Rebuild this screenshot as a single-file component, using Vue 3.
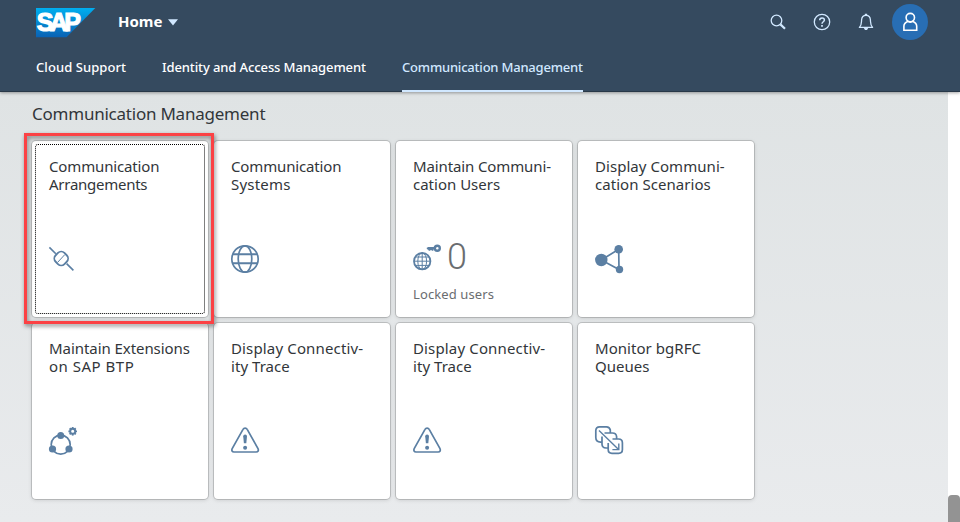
<script setup>
const tabs = [
  { label: 'Cloud Support', cls: 'tab-support' },
  { label: 'Identity and Access Management', cls: 'tab-identity' },
  { label: 'Communication Management', cls: 'tab-comm', active: true },
]

const tiles = [
  { icon: 'connect', focused: true, lines: [['Communication', -0.15], ['Arrangements', -0.26]] },
  { icon: 'globe', lines: [['Communication', -0.15], ['Systems', 0.2]] },
  { icon: 'key', value: '0', footer: 'Locked users', lines: [['Maintain Communi-', -0.12], ['cation Users', 0]] },
  { icon: 'share', lines: [['Display Communi-', 0.05], ['cation Scenarios', 0.05]] },
  { icon: 'extension', lines: [['Maintain Extensions', -0.06], ['on SAP BTP', 0.5]] },
  { icon: 'warning', lines: [['Display Connectiv-', 0.15], ['ity Trace', 0.05]] },
  { icon: 'warning', lines: [['Display Connectiv-', 0.15], ['ity Trace', 0.05]] },
  { icon: 'queue', lines: [['Monitor bgRFC', 0.04], ['Queues', 0]] },
]
const teeth = [0, 45, 90, 135, 180, 225, 270, 315]
</script>

<template>
  <div class="shell">
    <header class="header">
      <div class="bar">
        <svg class="logo" width="60" height="30" viewBox="0 0 60 30">
          <defs>
            <linearGradient id="sapBlue" x1="0" y1="0" x2="0" y2="1">
              <stop offset="0" stop-color="#00aeef" />
              <stop offset="1" stop-color="#0a62b4" />
            </linearGradient>
          </defs>
          <path d="M0 0H59.300L30.500 29.300H0Z" fill="url(#sapBlue)" />
          <text class="logo-text" x="0.800" y="23.200">SAP</text>
        </svg>
        <span class="home">Home</span>
        <svg class="caret" width="10" height="7" viewBox="0 0 10 7"><path d="M0 0.300H10L5 6.600Z" fill="#d1e8ff" /></svg>
        <div class="actions">
          <svg width="16" height="16" viewBox="0 0 16 16" class="act">
            <circle cx="6.500" cy="6.500" r="5.300" />
            <path d="M10.400 10.400L15 14.700" stroke-width="2.200" />
          </svg>
          <svg width="18" height="18" viewBox="0 0 18 18" class="act">
            <circle cx="9" cy="9" r="7.700" />
            <path d="M6.700 7.200C6.700 4.200 11.400 4.200 11.400 7C11.400 8.800 9 8.700 9 10.800" stroke-width="1.500" />
            <path d="M9 12.100V13.700" stroke-width="1.700" />
          </svg>
          <svg width="16" height="18" viewBox="0 0 16 18" class="act">
            <path d="M1.400 14.400C3.700 12.300 3.400 10 3.600 6.800C3.800 3.800 5.300 2.300 8 2.300C10.700 2.300 12.200 3.800 12.400 6.800C12.600 10 12.300 12.300 14.600 14.400Z" stroke-linejoin="round" />
            <path d="M6.800 1.400H9.200" />
            <path d="M5.800 15H10.200L9 17H7Z" fill="#d1e8ff" stroke="none" />
          </svg>
          <div class="avatar">
            <svg width="16" height="20" viewBox="0 0 16 20">
              <circle cx="8.300" cy="5.600" r="4.200" />
              <path d="M1.900 18.300V14.300C1.900 11.800 3.600 10.200 5.700 9.400Q8.300 10.800 10.900 9.400C13 10.200 14.700 11.800 14.700 14.300V18.300Z" />
            </svg>
          </div>
        </div>
      </div>
      <nav class="tabs">
        <a v-for="t in tabs" :key="t.label" class="tab" :class="[t.cls, { active: t.active }]">{{ t.label }}</a>
      </nav>
    </header>

    <div class="body">
      <main class="content">
        <h2 class="heading">Communication Management</h2>
        <div class="grid">
          <article v-for="(tile, i) in tiles" :key="i" class="tile" :class="{ focused: tile.focused }">
            <h3 class="title">
              <span v-for="l in tile.lines" :key="l[0]" class="line" :style="{ letterSpacing: l[1] + 'px' }">{{ l[0] }}</span>
            </h3>
            <div class="kpi">
              <svg class="icon" width="30" height="30" viewBox="0 0 30 30">
                <g v-if="tile.icon === 'connect'">
                  <path d="M.4 3.400L6.800 9.800M17.600 19.600L24.400 26.400" stroke-width="1.600" />
                  <rect x="6" y="8.300" width="12.400" height="12.400" rx="4.600" transform="rotate(45 12.200 14.500)" stroke-width="1.800" />
                  <path d="M8.600 18.400L15.800 10.600" stroke-width="1" />
                </g>
                <g v-else-if="tile.icon === 'globe'" stroke-width="1.700">
                  <circle cx="14" cy="15" r="13.200" />
                  <ellipse cx="14" cy="15" rx="6.800" ry="13.200" />
                  <path d="M1.600 10.200H26.400M1.600 19.200H26.400" stroke-width="2" />
                </g>
                <g v-else-if="tile.icon === 'key'">
                  <circle cx="9.200" cy="17.200" r="8.200" stroke-width="1.800" />
                  <ellipse cx="9.200" cy="17.200" rx="4.400" ry="8.300" stroke-width="1" />
                  <path d="M9.200 9V25.400M1 17.200H17.400M2.300 13H16.100M2.300 21.400H16.100" stroke-width="1" />
                  <circle cx="24.300" cy="4.300" r="2.500" stroke-width="2.400" />
                  <path d="M13.500 4L15.200 3H22V5.600H20.400V6.800H18.600V5.900H17.400V6.800H15.800L15 5.600H14.400Z" class="solid" />
                </g>
                <g v-else-if="tile.icon === 'share'">
                  <path d="M6.300 16L23.700 5.300L24 25.500Z" stroke-width="1.700" />
                  <circle class="solid" cx="6.300" cy="16" r="6.200" />
                  <circle class="solid" cx="23.700" cy="5.300" r="4.300" />
                  <circle class="solid" cx="24.500" cy="25.500" r="3.700" />
                </g>
                <g v-else-if="tile.icon === 'extension'">
                  <circle cx="11.700" cy="18.600" r="9.500" stroke-width="1.700" />
                  <circle class="solid" cx="11.700" cy="9.500" r="3.500" />
                  <circle class="solid" cx="3.500" cy="23" r="3.600" />
                  <circle class="solid" cx="20" cy="23" r="3.600" />
                  <circle cx="23.700" cy="5.300" r="2.500" stroke-width="1.900" />
                  <path v-for="a in teeth" :key="a" d="M23.700 1V2.600" stroke-width="1.800" :transform="`rotate(${a} 23.700 5.300)`" />
                </g>
                <g v-else-if="tile.icon === 'warning'">
                  <path d="M12 3.300C12.900 1.600 15.300 1.600 16.200 3.300L27 22.600C27.900 24.500 27 26 25.200 26H3C1.200 26 .3 24.500 1.200 22.600Z" stroke-width="1.700" />
                  <path class="solid" d="M12.200 10.200Q12.200 8.500 14.100 8.500Q16 8.500 16 10.200L15.300 17.200H12.900Z" />
                  <circle class="solid" cx="14.100" cy="21.800" r="2" />
                </g>
                <g v-else stroke-width="1.700">
                  <path d="M7 16.200H5.600Q.8 15.800 .8 11.500V4.600Q.8 .8 4.600 .8H11.500Q14.600 .8 15.300 4V7" />
                  <path d="M9.500 7H17.500Q21.200 7 21.600 10.600V13M7 10.600V18.200Q7.200 21.700 11 22H13.200" />
                  <path d="M13.200 17V23.600Q13.200 27.400 17 27.400H23.600Q27.400 27.400 27.400 23.600V16.800Q27.400 13 23.600 13H17.500" />
                  <path d="M4 4.400L23.600 23.400M23.800 17.600V23.600H17.400" stroke-width="1.400" />
                </g>
              </svg>
              <span v-if="tile.value" class="value">{{ tile.value }}</span>
            </div>
            <div v-if="tile.footer" class="footer">{{ tile.footer }}</div>
          </article>
        </div>
      </main>
      <div class="scrollbar"><div class="thumb"></div></div>
    </div>
  </div>
</template>

<style>
body { overflow: hidden; }
</style>

<style scoped>
.shell { display: flex; flex-direction: column; height: 522px; font-family: "Noto Sans", "Liberation Sans", sans-serif; color: #32363a; }
.header { position: relative; z-index: 2; box-sizing: border-box; height: 92px; flex: none; background: #354a5f; border-bottom: 1px solid #283848; box-shadow: 0 1px 3px rgba(0, 0, 0, .35); }
.bar { display: flex; align-items: center; height: 44px; padding: 0 32px 0 36px; box-sizing: border-box; }
.logo { display: block; margin-top: 2px; }
.logo-text { font: bold 25px "Liberation Sans", sans-serif; letter-spacing: -3.6px; fill: #fff; stroke: #fff; stroke-width: 1.2px; }
.home { margin-left: 22px; margin-top: -2px; font-size: 15px; font-weight: 700; line-height: 20px; color: #fff; }
.caret { margin-left: 6px; margin-top: 1px; }
.actions { margin-left: auto; display: flex; align-items: center; }
.act { fill: none; stroke: #d1e8ff; stroke-width: 1.3; display: block; }
.act:nth-child(1) { margin-right: 27px; }
.act:nth-child(2) { margin-right: 27px; }
.act:nth-child(3) { margin-right: 18px; }
.avatar { display: flex; align-items: center; justify-content: center; width: 36px; height: 36px; border-radius: 50%; background: #286eb4; }
.avatar svg { fill: none; stroke: #fff; stroke-width: 1.6; }
.tabs { display: flex; gap: 36px; height: 48px; padding-left: 36px; }
.tab { box-sizing: border-box; height: 48px; flex: none; font-size: 13px; font-weight: 500; line-height: 46px; color: #fff; white-space: nowrap; }
.tab-support { width: 90px; letter-spacing: .07px; }
.tab-identity { width: 204px; letter-spacing: -.11px; }
.tab-comm { width: 181px; letter-spacing: -.21px; }
.active { color: #d1e8ff; border-bottom: 2px solid #d1e8ff; }
.body { flex: 1; display: flex; min-height: 0; background: linear-gradient(#dfe3e4, #e9ebed); }
.content { flex: 1; padding: 10px 0 0 32px; }
.heading { margin: 0 0 15px; font-size: 17px; font-weight: 400; line-height: 24px; letter-spacing: -.23px; }
.grid { display: grid; grid-template-columns: repeat(4, 176px); grid-auto-rows: 176px; gap: 6px; }
.tile { position: relative; box-sizing: border-box; padding: 16px 16px 0 17px; background: #fff; border-radius: 4px; box-shadow: 0 0 0 1px rgba(0, 0, 0, .15), 0 1px 4px rgba(0, 0, 0, .15); }
.title { margin: 0; height: 87px; font-size: 15px; font-weight: 400; line-height: 18px; }
.line { display: block; white-space: nowrap; }
.kpi { display: flex; height: 30px; }
.icon { flex: none; fill: none; stroke: #5b7fa3; display: block; overflow: visible; }
.icon .solid { fill: #5b7fa3; stroke: none; }
.value { margin-left: 4px; font: 300 36px/26px Roboto, sans-serif; color: #6a6d70; }
.footer { margin-top: 11px; font-size: 13px; line-height: 18px; letter-spacing: .1px; color: #6a6d70; }
.focused { z-index: 1; }
.focused::before { content: ""; position: absolute; inset: 3px; border: 1px dotted #000; border-radius: 3px; }
.focused::after { content: ""; position: absolute; inset: -8px -6px -7px -8px; border: 3px solid #fb4144; filter: drop-shadow(1px 2px 2px rgba(0, 0, 0, .5)); }
.scrollbar { width: 12px; background: #fff; display: flex; align-items: flex-end; }
.thumb { width: 12px; height: 27px; background: #939393; border-radius: 4px 4px 0 0; }
</style>
